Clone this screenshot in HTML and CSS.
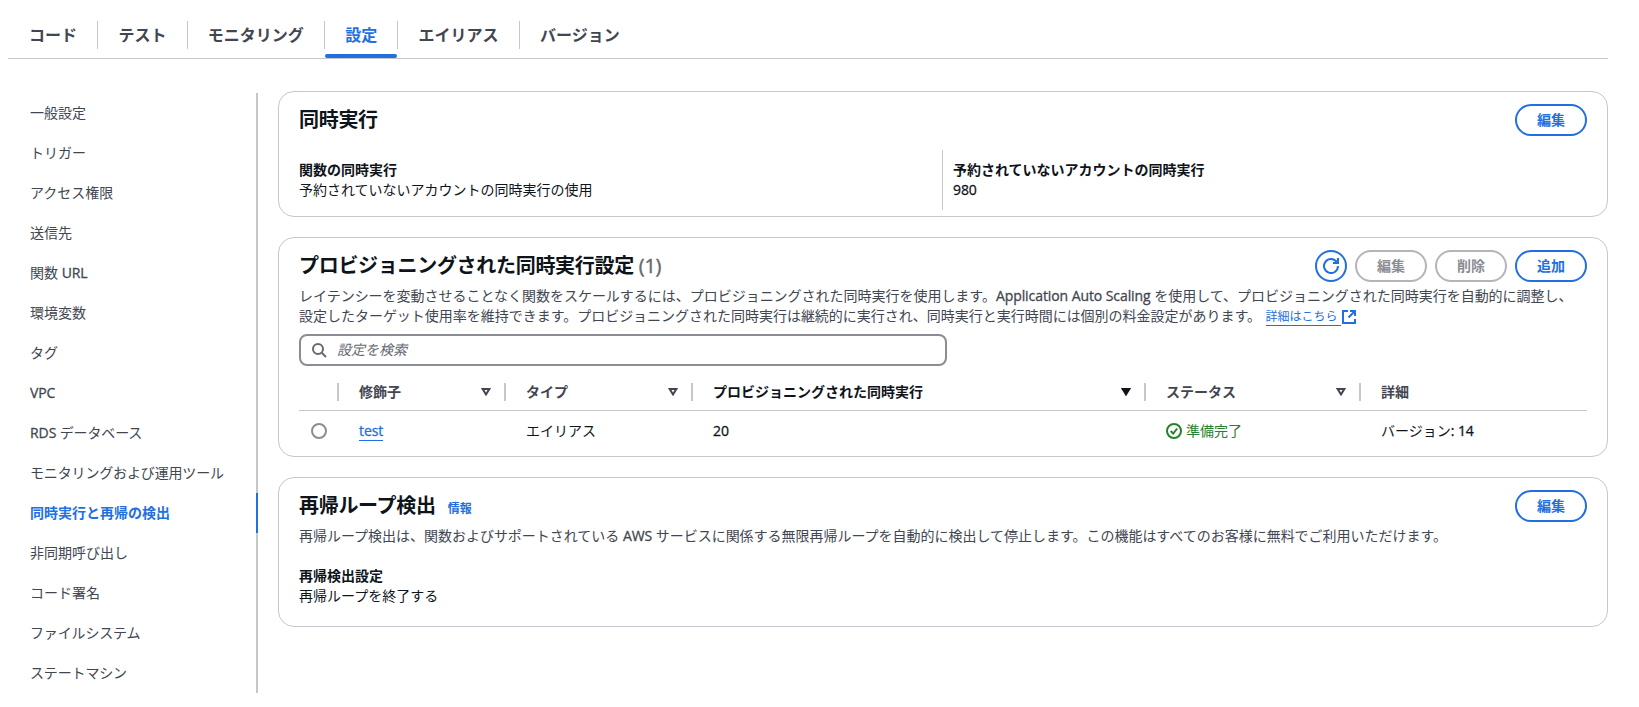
FILE: index.html
```html
<!DOCTYPE html>
<html lang="ja">
<head>
  <meta charset="UTF-8">
  <meta name="viewport" content="width=device-width, initial-scale=1.0">
  <title>同時実行と再帰の検出</title>
  <link rel="stylesheet" href="styles.css">
</head>
<body>
  <nav class="tabs">
    <a class="tab"><span>コード</span></a>
    <a class="tab"><span>テスト</span></a>
    <a class="tab"><span>モニタリング</span></a>
    <a class="tab active"><span>設定</span></a>
    <a class="tab"><span>エイリアス</span></a>
    <a class="tab"><span>バージョン</span></a>
  </nav>

  <div class="layout">
    <ul class="side">
      <li>一般設定</li>
      <li>トリガー</li>
      <li>アクセス権限</li>
      <li>送信先</li>
      <li>関数 <span class="latin">URL</span></li>
      <li>環境変数</li>
      <li>タグ</li>
      <li><span class="latin">VPC</span></li>
      <li class="tight"><span class="latin">RDS</span> データベース</li>
      <li class="tight">モニタリングおよび運用ツール</li>
      <li class="active">同時実行と再帰の検出</li>
      <li>非同期呼び出し</li>
      <li>コード署名</li>
      <li class="tight">ファイルシステム</li>
      <li class="tight">ステートマシン</li>
    </ul>

    <main class="content">
      <section class="card concurrency">
        <div class="card-header">
          <h2>同時実行</h2>
          <button class="btn">編集</button>
        </div>
        <div class="columns">
          <div class="column">
            <div class="label">関数の同時実行</div>
            <div>予約されていないアカウントの同時実行の使用</div>
          </div>
          <div class="column">
            <div class="label">予約されていないアカウントの同時実行</div>
            <div class="latin">980</div>
          </div>
        </div>
      </section>

      <section class="card provisioned">
        <div class="card-header">
          <h2>プロビジョニングされた同時実行設定 <span class="count">(1)</span></h2>
          <div class="actions">
            <button class="btn btn-icon">
              <svg width="16" height="16" viewBox="0 0 16 16" fill="none" stroke="currentColor" stroke-width="2">
                <path d="M15 8A7 7 0 1 1 13.8 4.1"/>
                <path d="M10 5h5V0"/>
              </svg>
            </button>
            <button class="btn" disabled>編集</button>
            <button class="btn" disabled>削除</button>
            <button class="btn">追加</button>
          </div>
        </div>
        <p class="desc">レイテンシーを変動させることなく関数をスケールするには、プロビジョニングされた同時実行を使用します。<span class="latin">Application Auto Scaling</span> を使用して、プロビジョニングされた同時実行を自動的に調整し、<br>設定したターゲット使用率を維持できます。プロビジョニングされた同時実行は継続的に実行され、同時実行と実行時間には個別の料金設定があります。 <a class="more">詳細はこちら</a><svg class="external" width="14" height="14" viewBox="0 0 14 14" fill="none" stroke="currentColor" stroke-width="2"><path d="M6 1H1v12h12V9"/><path d="M8 1h5v5M13 1 6.5 7.5"/></svg></p>
        <div class="search">
          <svg width="16" height="16" viewBox="0 0 16 16" fill="none" stroke="currentColor" stroke-width="2">
            <circle cx="7" cy="7" r="5"/>
            <path d="m10.5 10.5 4.5 4.5"/>
          </svg>
          <span>設定を検索</span>
        </div>
        <table>
          <colgroup>
            <col class="c-select">
            <col class="c-name">
            <col class="c-type">
            <col class="c-value">
            <col class="c-status">
            <col>
          </colgroup>
          <thead>
            <tr>
              <th></th>
              <th><div>修飾子<svg class="sort" width="10" height="8" viewBox="0 0 10 8"><path d="M1.7 1h6.6L5 6.4z"/></svg></div></th>
              <th><div>タイプ<svg class="sort" width="10" height="8" viewBox="0 0 10 8"><path d="M1.7 1h6.6L5 6.4z"/></svg></div></th>
              <th class="sorted"><div>プロビジョニングされた同時実行<svg class="sort" width="10" height="8" viewBox="0 0 10 8"><path d="M1.7 1h6.6L5 6.4z"/></svg></div></th>
              <th><div>ステータス<svg class="sort" width="10" height="8" viewBox="0 0 10 8"><path d="M1.7 1h6.6L5 6.4z"/></svg></div></th>
              <th><div>詳細</div></th>
            </tr>
          </thead>
          <tbody>
            <tr>
              <td><span class="radio"></span></td>
              <td><a class="link latin">test</a></td>
              <td>エイリアス</td>
              <td class="latin">20</td>
              <td>
                <div class="status">
                  <svg width="16" height="16" viewBox="0 0 16 16" fill="none" stroke="currentColor" stroke-width="2">
                    <circle cx="8" cy="8" r="7"/>
                    <path d="m4.7 8 2.5 2.5 4-5"/>
                  </svg>
                  準備完了
                </div>
              </td>
              <td>バージョン<span class="latin">: 14</span></td>
            </tr>
          </tbody>
        </table>
      </section>

      <section class="card recursion">
        <div class="card-header">
          <h2>再帰ループ検出<a class="info">情報</a></h2>
          <button class="btn">編集</button>
        </div>
        <p class="desc">再帰ループ検出は、関数およびサポートされている <span class="latin">AWS</span> サービスに関係する無限再帰ループを自動的に検出して停止します。この機能はすべてのお客様に無料でご利用いただけます。</p>
        <div class="setting">
          <div class="label">再帰検出設定</div>
          <div>再帰ループを終了する</div>
        </div>
      </section>
    </main>
  </div>
</body>
</html>
```
FILE: styles.css
```css
* {
  margin: 0;
  padding: 0;
  box-sizing: border-box;
}
body {
  background: #fff;
  color: #0f141a;
  font-family: "Open Sans", "Noto Sans CJK JP", sans-serif;
  font-size: 14px;
  line-height: 20px;
  overflow: hidden;
}
.latin {
  letter-spacing: -0.08px;
  -webkit-text-stroke: 0.3px currentColor;
}

/* tabs */
.tabs {
  display: flex;
  height: 59px;
  margin: 0 31px 0 8px;
  padding-top: 21px;
  border-bottom: 1px solid #c6c6cd;
}
.tab {
  position: relative;
  height: 28px;
  padding: 0 20.2px;
  border-right: 1px solid #c6c6cd;
  color: #424650;
  font-size: 16px;
  font-weight: 700;
  line-height: 28px;
}
.tab:first-child {
  padding-left: 21px;
}
.tab:last-child {
  border-right: none;
}
.tab.active {
  color: #226fe0;
}
.tab.active::after {
  content: "";
  position: absolute;
  left: 0;
  right: 0;
  bottom: -9px;
  height: 4px;
  border-radius: 2px;
  background: #226fe0;
}

.layout {
  display: flex;
  align-items: flex-start;
  padding: 32px 31px 0 8px;
}

/* side navigation */
.side {
  width: 250px;
  margin: 2px 20px 0 0;
  list-style: none;
}
.side li {
  height: 40px;
  padding-left: 22px;
  border-right: 2px solid #c6c6cd;
  color: #424650;
  line-height: 39px;
}
.side .tight {
  letter-spacing: -0.15px;
}
.side .active {
  border-color: #226fe0;
  color: #226fe0;
  font-weight: 700;
}

/* cards */
.content {
  flex: 1;
  display: flex;
  flex-direction: column;
  gap: 20px;
}
.card {
  padding: 12px 20px 0 20px;
  border: 1px solid #c6c6cd;
  border-radius: 16px;
}
.concurrency {
  height: 126px;
}
.provisioned {
  height: 220px;
}
.recursion {
  height: 150px;
}
.card-header {
  display: flex;
  justify-content: space-between;
  align-items: center;
  height: 32px;
}
h2 {
  font-size: 20px;
  font-weight: 700;
  line-height: 24px;
  letter-spacing: -0.3px;
}
.count {
  color: #656871;
  font-weight: 400;
  -webkit-text-stroke: 0.4px currentColor;
}
.info {
  margin-left: 12px;
  color: #226fe0;
  font-size: 12px;
  letter-spacing: 0;
}
.recursion h2 {
  padding-top: 2px;
}
.actions {
  display: flex;
  gap: 8px;
}
.btn {
  width: 72px;
  height: 32px;
  border: 2px solid #226fe0;
  border-radius: 16px;
  background: #fff;
  color: #226fe0;
  font: inherit;
  font-weight: 700;
}
.btn:disabled {
  border-color: #b4b4bb;
  color: #8c8c94;
}
.btn-icon {
  display: flex;
  align-items: center;
  justify-content: center;
  width: 32px;
}
.desc {
  margin-top: 4px;
  color: #424650;
  white-space: nowrap;
  letter-spacing: -0.02px;
}
.label {
  font-weight: 700;
}
.columns {
  display: flex;
  margin-top: 14px;
}
.column {
  width: 643px;
  height: 60px;
  padding-top: 10px;
}
.column + .column {
  padding-left: 10px;
  border-left: 1px solid #c6c6cd;
}
.setting {
  margin-top: 20px;
}
.more {
  display: inline-block;
  height: 18px;
  margin-left: 1px;
  padding-right: 4px;
  border-bottom: 1px solid #226fe0;
  color: #226fe0;
  font-size: 12px;
  line-height: 18px;
}
.external {
  margin-left: 1px;
  color: #226fe0;
  vertical-align: -3px;
}

/* search */
.search {
  display: flex;
  align-items: center;
  gap: 10px;
  width: 648px;
  height: 32px;
  margin: 8px 0 0 0;
  padding-left: 10px;
  border: 2px solid #8c8c94;
  border-radius: 8px;
  color: #656871;
}
.search span {
  font-style: italic;
}

/* table */
table {
  width: 1288px;
  margin-top: 8px;
  table-layout: fixed;
  border-collapse: separate;
  border-spacing: 0;
}
.c-select {
  width: 38px;
}
.c-name {
  width: 167px;
}
.c-type {
  width: 187px;
}
.c-value {
  width: 453px;
}
.c-status {
  width: 215px;
}
th {
  height: 37px;
  border-bottom: 1px solid #c6c6cd;
  color: #424650;
  text-align: left;
}
th div {
  display: flex;
  align-items: center;
  justify-content: space-between;
  height: 18px;
  padding: 0 13px 0 20px;
  border-left: 2px solid #c6c6cd;
}
.sort {
  fill: none;
  stroke: #424650;
  stroke-width: 2;
}
.sorted {
  color: #0f141a;
}
.sorted .sort {
  fill: #0f141a;
  stroke: #0f141a;
}
td {
  height: 40px;
  padding-left: 22px;
}
td:first-child {
  padding-left: 12px;
}
.radio {
  display: block;
  width: 16px;
  height: 16px;
  border: 2px solid #8c8c94;
  border-radius: 50%;
}
.link {
  display: inline-block;
  height: 20px;
  border-bottom: 1px solid #226fe0;
  color: #226fe0;
}
.status {
  display: flex;
  align-items: center;
  gap: 4px;
  color: #25822b;
}
```
